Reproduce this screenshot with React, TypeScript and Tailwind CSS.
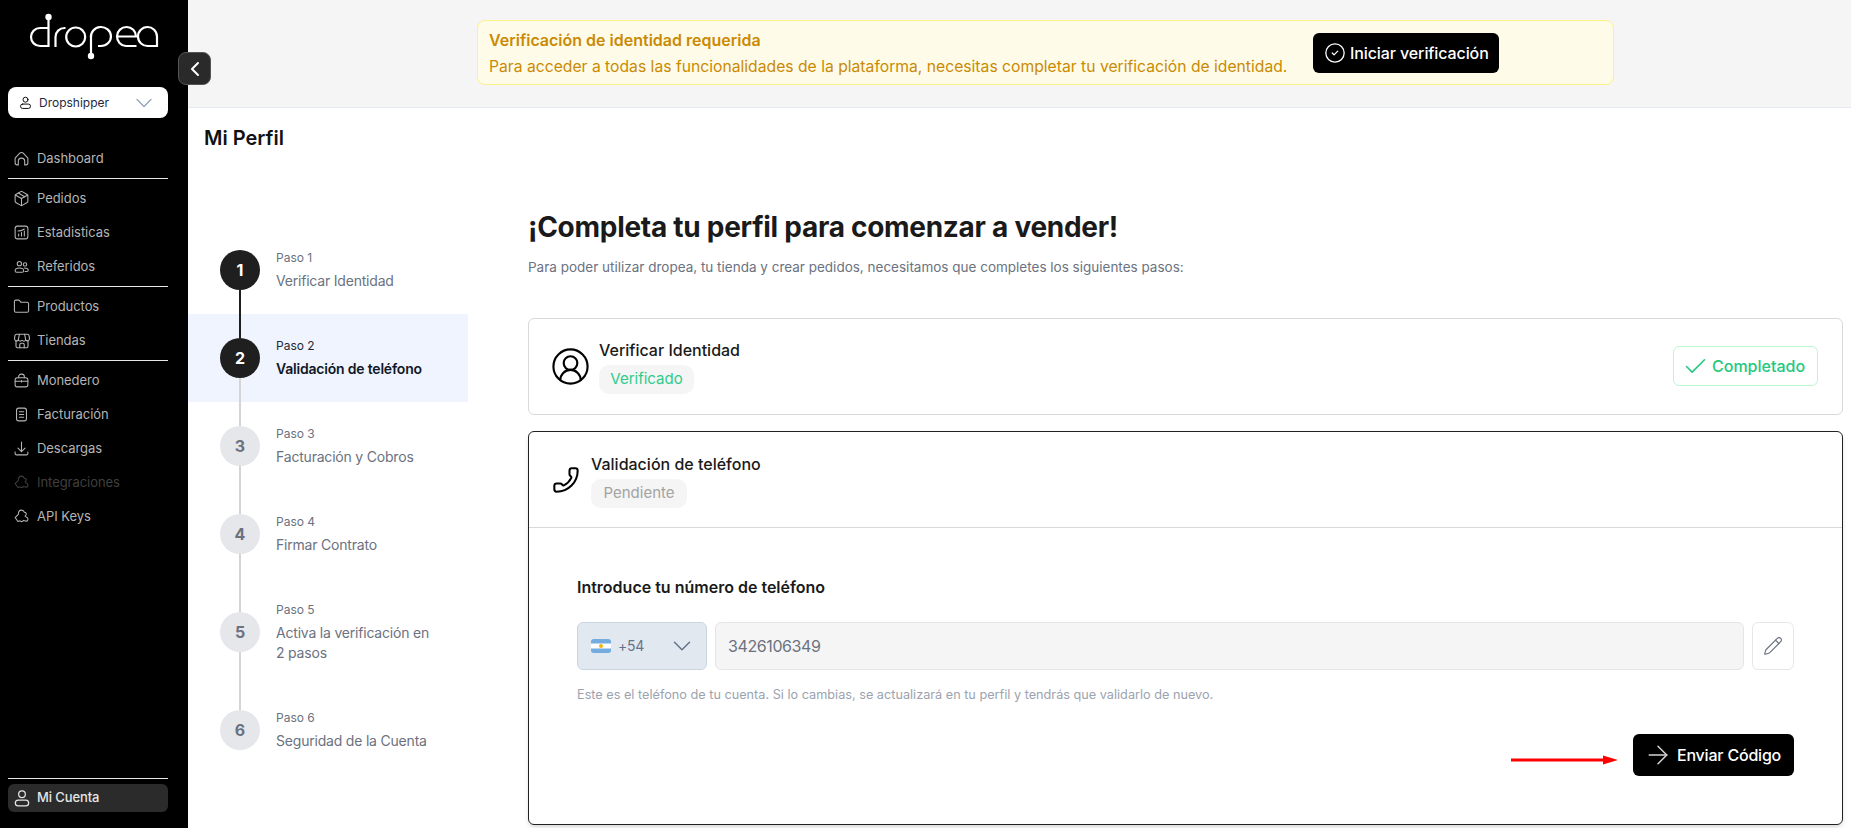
import { ArrowRight, Check, ChevronDown, ChevronLeft, CircleCheck, CircleUserRound, Folder, Package, Pencil, Phone } from "lucide-react";
import type { ReactNode } from "react";

const Ico = ({ children, className = "h-[17px] w-[17px]" }: { children: ReactNode; className?: string }) => (
  <svg
    viewBox="0 0 24 24"
    fill="none"
    stroke="currentColor"
    strokeWidth={1.5}
    strokeLinecap="round"
    strokeLinejoin="round"
    className={`shrink-0 ${className}`}
  >
    {children}
  </svg>
);

const Logo = () => (
  <svg viewBox="28 12 132 50" fill="none" stroke="#fff" strokeWidth={2.2} className="h-[50px] w-[132px]">
    <circle cx="48.500" cy="17" r="3.200" fill="#fff" stroke="none" />
    <path d="M48.500 17V46H40a9 9 0 0 1 0-18h8.500" />
    <path d="M55.500 47V37a9 9 0 0 1 9-9h1" />
    <circle cx="75.700" cy="37" r="9.500" />
    <path d="M91 56V37.500a10 9.500 0 1 1 10 8.500h-3" />
    <circle cx="91" cy="56" r="3.200" fill="#fff" stroke="none" />
    <path d="M136.500 46H126a9.500 9.500 0 1 1 10-9.500H116.500" />
    <path d="M157 46H148a9.500 9.500 0 1 1 9-9.500Z" />
  </svg>
);

const HomeIcon = () => (
  <Ico>
    <path d="M3 11.500 9.500 4.500a3.400 3.400 0 0 1 5 0L21 11.500V18a3 3 0 0 1-3 3h-1.500v-5a4.500 4.500 0 0 0-9 0v5H6a3 3 0 0 1-3-3Z" />
  </Ico>
);
const StatsIcon = () => (
  <Ico>
    <rect x="3" y="3" width="18" height="18" rx="3.500" />
    <path d="M8 17v-3M12 17v-5M16 17v-7M7 10c3 0 6-1 9-3" />
  </Ico>
);
const UsersIcon = () => (
  <Ico>
    <circle cx="9" cy="8" r="3" />
    <circle cx="17" cy="9" r="2.400" />
    <path d="M3 18c0-2.500 2.500-4 6-4s6 1.500 6 3.500c0 1.500-1 2.500-2 2.500H5c-1 0-2-1-2-2Z" />
    <path d="M16 14c3 0 5.500 1 5.500 3.200 0 1-.8 1.800-1.800 1.800H17" />
  </Ico>
);
const StoreIcon = () => (
  <Ico className="h-[18px] w-[18px]">
    <path d="M5 3h14a2.500 2.500 0 0 1 2.500 2.200L22 9a3 3 0 0 1-5 2 3.300 3.300 0 0 1-5 0 3.300 3.300 0 0 1-5 0 3 3 0 0 1-5-2l.5-3.800A2.500 2.500 0 0 1 5 3Z" />
    <path d="M8.500 3 7 11M15.500 3 17 11M4 12v7a2 2 0 0 0 2 2h12a2 2 0 0 0 2-2v-7" />
    <path d="M9 21v-4a2 2 0 0 1 2-2h2a2 2 0 0 1 2 2v4" />
  </Ico>
);
const WalletIcon = () => (
  <Ico>
    <rect x="3" y="8" width="18" height="13" rx="3" />
    <path d="M8 8V6.500A3.500 3.500 0 0 1 11.500 3h1A3.500 3.500 0 0 1 16 6.500V8M3 13h18M12 12v2" />
  </Ico>
);
const InvoiceIcon = () => (
  <Ico>
    <rect x="5" y="3" width="14" height="18" rx="3" />
    <path d="M9 8h6M9 12h6M9 16h6" />
  </Ico>
);
const DownloadIcon = () => (
  <Ico>
    <path d="M12 3v13M7 11.500l5 5 5-5M3 17v2a2 2 0 0 0 2 2h14a2 2 0 0 0 2-2v-2" />
  </Ico>
);
const CloudKeyIcon = () => (
  <Ico>
    <path d="M3 13.500 7.500 9C7.500 5.500 9.500 3 12 3c2 0 3.500 1 4 3 2.500 0 3.500 2.500 2 4.500l-1 1 3.500 2.500c1.500 2 0 5-2.500 4.500l-3.500-1c-1 2.500-3.500 2-4.500.5l-3 1Z" />
  </Ico>
);
const UserIcon = ({ className = "h-[17px] w-[17px]" }: { className?: string }) => (
  <Ico className={className}>
    <circle cx="12" cy="7.500" r="4" />
    <rect x="4" y="14.500" width="16" height="7" rx="3.500" />
  </Ico>
);

const groups = [
  [{ label: "Dashboard", icon: <HomeIcon /> }],
  [
    { label: "Pedidos", icon: <Package strokeWidth={1.5} className="h-[17px] w-[17px]" /> },
    { label: "Estadisticas", icon: <StatsIcon /> },
    { label: "Referidos", icon: <UsersIcon /> },
  ],
  [
    { label: "Productos", icon: <Folder strokeWidth={1.5} className="h-[17px] w-[17px]" /> },
    { label: "Tiendas", icon: <StoreIcon /> },
  ],
  [
    { label: "Monedero", icon: <WalletIcon /> },
    { label: "Facturación", icon: <InvoiceIcon /> },
    { label: "Descargas", icon: <DownloadIcon /> },
    { label: "Integraciones", icon: <CloudKeyIcon />, dim: true },
    { label: "API Keys", icon: <CloudKeyIcon /> },
  ],
];

const Sidebar = () => (
  <aside className="flex h-full w-[188px] shrink-0 flex-col bg-black pb-4 pl-2 pr-5 pt-3">
    <div className="ml-5">
      <Logo />
    </div>
    <div className="mt-[25px] flex h-[31px] items-center rounded-lg bg-white pl-[10px] pr-[10px] text-xs text-[#1e293b]">
      <UserIcon className="h-[15px] w-[15px] text-black" />
      <span className="ml-[6px]">Dropshipper</span>
      <ChevronDown strokeWidth={1.1} className="ml-auto h-7 w-7 text-[#94a3b8]" />
    </div>
    <nav className="mt-[23px]">
      {groups.map((group, i) => (
        <div key={i}>
          {i > 0 && <div className="mb-[2px] mt-[3px] h-px bg-[#e5e7eb]" />}
          {group.map((item) => (
            <div
              key={item.label}
              className={`flex h-[34px] items-center gap-[7px] pl-[5px] pt-[1px] text-[13px] tracking-[-0.05px] ${item.dim ? "text-[#3f3f3f]" : "text-[#b5b5b5]"}`}
            >
              <span className="flex w-[17px] justify-center">{item.icon}</span>
              <span>{item.label}</span>
            </div>
          ))}
        </div>
      ))}
    </nav>
    <div className="mt-auto">
      <div className="mb-[5px] h-px bg-[#e5e7eb]" />
      <div className="flex h-[28px] items-center gap-[5px] rounded-md bg-[#2b2b2b] pl-[4px] text-[13px] font-medium tracking-[-0.1px] text-[#e5e5e5]">
        <UserIcon className="h-[20px] w-[20px]" />
        <span>Mi Cuenta</span>
      </div>
    </div>
  </aside>
);

const Banner = () => (
  <div className="flex h-[108px] shrink-0 items-start border-b border-[#e5e9f5] bg-[#f5f5f5] pl-[289px] pt-5">
    <div className="flex h-[65px] w-[1137px] items-center gap-6 rounded-lg border border-[#fef08a] bg-[#fefce8] pl-[11px] text-[#ca8a04]">
      <div className="mt-[2px] w-[800px] whitespace-nowrap">
        <p className="text-base font-semibold leading-5">Verificación de identidad requerida</p>
        <p className="mt-[7px] text-[15.7px] leading-5">
          Para acceder a todas las funcionalidades de la plataforma, necesitas completar tu verificación de identidad.
        </p>
      </div>
      <button className="flex h-10 w-[186px] items-center gap-1 rounded-md bg-black pl-[11px] text-base font-medium tracking-[-0.1px] text-white">
        <CircleCheck strokeWidth={1.4} className="h-[22px] w-[22px]" />
        Iniciar verificación
      </button>
    </div>
  </div>
);

const steps = [
  { n: 1, title: "Verificar Identidad", line: "dark", lineH: "h-[48px]" },
  { n: 2, title: "Validación de teléfono", line: "grey", lineH: "h-[48px]", active: true },
  { n: 3, title: "Facturación y Cobros", line: "grey", lineH: "h-[48px]" },
  { n: 4, title: "Firmar Contrato", line: "grey", lineH: "h-[58px]" },
  { n: 5, title: "Activa la verificación en 2 pasos", line: "grey", lineH: "h-[58px]" },
  { n: 6, title: "Seguridad de la Cuenta" },
];

const Steps = () => (
  <div className="w-[280px] shrink-0 pt-[17px]">
    {steps.map((s) => {
      const done = s.n <= 2;
      return (
        <div key={s.n} className={`flex items-center gap-4 py-6 pl-8 pr-8 ${s.active ? "bg-[#eff4fe]" : ""}`}>
          <div className="relative shrink-0">
            <div
              className={`relative z-10 flex h-10 w-10 items-center justify-center rounded-full text-base font-bold ${
                done ? "bg-[#1f1f1f] text-white" : "bg-[#e5e7eb] text-[#6b7280]"
              }`}
            >
              {s.n}
            </div>
            {s.line && (
              <div
                className={`absolute left-[19px] top-full z-0 w-[2px] ${s.lineH} ${s.line === "dark" ? "bg-[#1f1f1f]" : "bg-[#d4d4d4]"}`}
              />
            )}
          </div>
          <div>
            <p className={`text-xs leading-4 ${s.active ? "text-[#1f2937]" : "text-[#6b7280]"}`}>Paso {s.n}</p>
            <p className={`mt-1 translate-y-[1px] text-sm leading-5 tracking-[-0.2px] ${s.active ? "font-semibold text-[#111827]" : "text-[#6b7280]"}`}>{s.title}</p>
          </div>
        </div>
      );
    })}
  </div>
);

const Flag = () => (
  <svg viewBox="0 0 20 14" className="h-[14px] w-5 shrink-0">
    <rect width="20" height="14" rx="2.500" fill="#fff" />
    <path d="M0 4.500V2.500A2.500 2.500 0 0 1 2.500 0h15A2.500 2.500 0 0 1 20 2.500v2Z" fill="#74acdf" />
    <path d="M0 9.500v2A2.500 2.500 0 0 0 2.500 14h15a2.500 2.500 0 0 0 2.500-2.500v-2Z" fill="#74acdf" />
    <circle cx="10" cy="7" r="2" fill="#f6b40e" />
  </svg>
);

const PhoneCard = () => (
  <div className="mt-4 h-[394px] rounded-md border border-[#222] bg-white shadow-md">
    <div className="flex h-[96px] items-center gap-[11px] border-b border-[#d9d9d9] pl-[23px]">
      <Phone strokeWidth={1.75} className="h-7 w-7 -scale-x-100 text-black" />
      <div>
        <p className="text-base font-medium leading-6 text-[#1a1a1a]">Validación de teléfono</p>
        <span className="mt-[3px] flex h-[29px] w-[96px] items-center justify-center rounded-[10px] bg-[#f5f5f5] text-[15px] text-[#a3a3a3]">
          Pendiente
        </span>
      </div>
    </div>
    <div className="px-12 pt-[47px]">
      <p className="text-base font-semibold leading-6 text-[#1a1a1a]">Introduce tu número de teléfono</p>
      <div className="mt-[23px] flex h-12 gap-2">
        <div className="flex w-[130px] items-center rounded-md border border-[#cbd5e1] bg-[#e2e8f0] pl-[13px] pr-[9px] text-sm text-[#64748b]">
          <Flag />
          <span className="ml-[7px] tracking-[-0.2px]">+54</span>
          <ChevronDown strokeWidth={1.2} className="ml-auto h-[30px] w-[30px] text-[#64748b]" />
        </div>
        <div className="flex flex-1 items-center rounded-md border border-[#e5e5e5] bg-[#f5f5f5] pl-3 text-base tracking-[-0.4px] text-[#6b7280]">3426106349</div>
        <div className="flex w-[42px] items-center justify-center rounded-md border border-[#e5e7eb]">
          <Pencil strokeWidth={1.4} className="h-5 w-5 text-[#6b7280]" />
        </div>
      </div>
      <p className="mt-[17px] text-[12.7px] leading-4 text-[#9ca3af]">
        Este es el teléfono de tu cuenta. Si lo cambias, se actualizará en tu perfil y tendrás que validarlo de nuevo.
      </p>
      <div className="mt-[31px] flex items-center justify-end gap-[15px]">
        <svg viewBox="0 0 107 10" className="mt-[10px] h-[10px] w-[107px]">
          <path d="M0 5h93" stroke="#f00" strokeWidth={3} />
          <path d="M92 0.500 107 5 92 9.500Z" fill="#f00" />
        </svg>
        <button className="flex h-[42px] w-[161px] items-center gap-1 rounded-md bg-black pl-[10px] text-base font-medium tracking-[-0.2px] text-white">
          <ArrowRight strokeWidth={1.2} className="h-[30px] w-[30px] text-[#d4d4d4]" />
          Enviar Código
        </button>
      </div>
    </div>
  </div>
);

export default function App() {
  return (
    <div className="relative flex h-screen overflow-hidden bg-white font-['Inter',sans-serif]">
      <Sidebar />
      <button className="absolute left-[178px] top-[52px] z-20 flex h-[33px] w-[33px] items-center justify-center rounded-lg border border-[#555] bg-[#2a2a2a] text-white">
        <ChevronLeft strokeWidth={2} className="h-6 w-6" />
      </button>
      <main className="flex min-w-0 flex-1 flex-col">
        <Banner />
        <h2 className="mt-4 pl-4 text-xl font-semibold leading-7 text-[#111]">Mi Perfil</h2>
        <div className="mt-[57px] flex">
          <Steps />
          <section className="ml-[60px] w-[1315px]">
            <h1 className="text-[28px] font-bold leading-9 tracking-[-0.28px] text-[#1a1a1a]">¡Completa tu perfil para comenzar a vender!</h1>
            <p className="mt-3 text-[13.5px] leading-5 text-[#6b7280]">
              Para poder utilizar dropea, tu tienda y crear pedidos, necesitamos que completes los siguientes pasos:
            </p>
            <div className="mt-[41px] flex h-[97px] items-center rounded-md border border-[#d9d9d9] pb-[1px] pl-[21px] pr-6">
              <CircleUserRound strokeWidth={1.25} className="h-[41px] w-[41px] text-black" />
              <div className="ml-2">
                <p className="text-base font-medium leading-6 text-[#1a1a1a]">Verificar Identidad</p>
                <span className="mt-[3px] flex h-[29px] w-[95px] items-center justify-center rounded-[10px] bg-[#f5f5f5] text-[15px] text-[#2ecc8a]">
                  Verificado
                </span>
              </div>
              <div className="ml-auto flex h-10 w-[145px] items-center gap-[3px] rounded-md border border-[#bbf7d0] pl-2 text-base font-medium text-[#22c97e]">
                <Check strokeWidth={1.4} className="h-[27px] w-[27px]" />
                Completado
              </div>
            </div>
            <PhoneCard />
          </section>
        </div>
      </main>
    </div>
  );
}
